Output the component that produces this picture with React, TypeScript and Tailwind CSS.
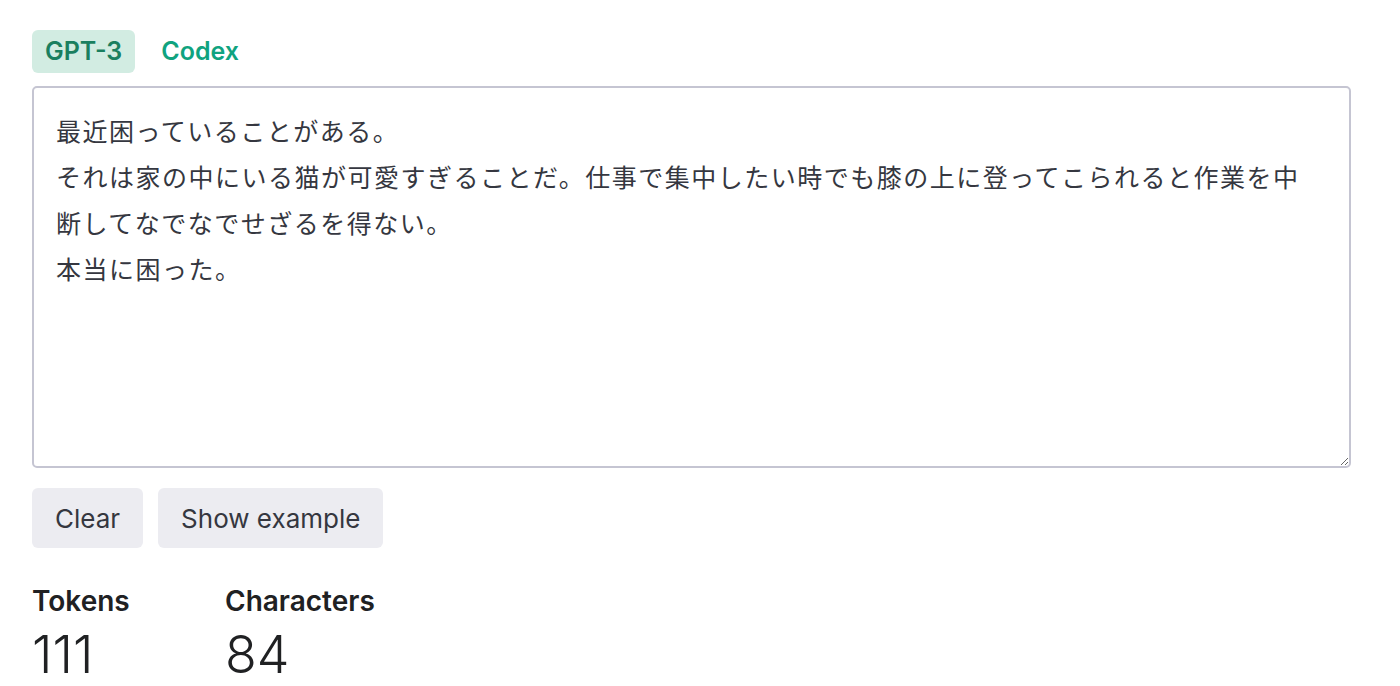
import { useState } from "react";

const sample =
  "最近困っていることがある。\nそれは家の中にいる猫が可愛すぎることだ。仕事で集中したい時でも膝の上に登ってこられると作業を中\n断してなでなでせざるを得ない。\n本当に困った。";

export default function App() {
  const [tab, setTab] = useState("gpt3");
  const [text, setText] = useState(sample);

  return (
    <div className="min-h-screen bg-white pl-8 pr-[49px] pt-[30px] font-['Inter','Noto_Sans_CJK_JP',sans-serif] text-[#353740]">
      {/* model tabs */}
      <div className="flex items-center gap-[13px]">
        <button
          onClick={() => setTab("gpt3")}
          className={`h-[43px] rounded-[6px] px-[13px] text-[25px] font-semibold ${
            tab === "gpt3" ? "bg-[#d2ece2] text-[#1a7f5f]" : "text-[#10a37f]"
          }`}
        >
          GPT-3
        </button>
        <button
          onClick={() => setTab("codex")}
          className={`h-[43px] rounded-[6px] px-[13px] text-[25px] font-semibold ${
            tab === "codex" ? "bg-[#d2ece2] text-[#1a7f5f]" : "text-[#10a37f]"
          }`}
        >
          Codex
        </button>
      </div>

      {/* input */}
      <textarea
        value={text}
        onChange={(e) => setText(e.target.value)}
        className="mt-[13px] block h-[382px] w-full rounded-[5px] border-2 border-[#c5c5d2] px-[22px] pt-[19px] font-['Noto_Sans_CJK_JP',sans-serif] text-[25px] leading-[46px] tracking-[1.5px] text-[#353740] outline-none"
      />

      {/* actions */}
      <div className="mt-[20px] flex gap-[15px]">
        <button onClick={() => setText("")} className="h-[60px] rounded-[6px] bg-[#ececf1] px-[23px] text-[26px] text-[#353740]">
          Clear
        </button>
        <button onClick={() => setText(sample)} className="h-[60px] rounded-[6px] bg-[#ececf1] px-[23px] text-[26px] text-[#353740]">
          Show example
        </button>
      </div>

      {/* stats */}
      <div className="mt-[37px] flex">
        <div className="w-[193px]">
          <div className="text-[28px] font-semibold leading-[32px] text-[#202123]">Tokens</div>
          <div className="mt-[8px] text-[52px] font-light leading-[60px] text-[#202123]">111</div>
        </div>
        <div>
          <div className="text-[28px] font-semibold leading-[32px] text-[#202123]">Characters</div>
          <div className="mt-[8px] text-[52px] font-light leading-[60px] text-[#202123]">84</div>
        </div>
      </div>
    </div>
  );
}
